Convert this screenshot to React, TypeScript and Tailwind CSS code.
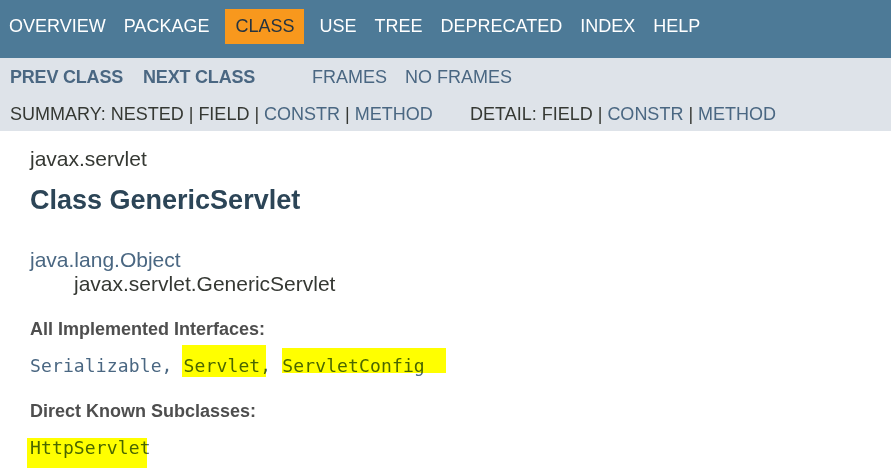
import React from 'react';

const navItems = ['OVERVIEW', 'PACKAGE', 'CLASS', 'USE', 'TREE', 'DEPRECATED', 'INDEX', 'HELP'];

interface MarkProps {
    children: React.ReactNode;
    box: string;
}

// marker highlight drawn over the text, multiplied like a real highlighter
const Mark: React.FC<MarkProps> = ({ children, box }) => (
    <span className="relative">
        {children}
        <span className={`absolute bg-[#ffff00] mix-blend-multiply ${box}`} />
    </span>
);

const App: React.FC = () => {
    return (
        <div className="w-[891px] h-[471px] overflow-hidden bg-white font-['Liberation_Sans',Arial,sans-serif] text-[#353833]">
            {/* top nav */}
            <div className="h-[58px] bg-[#4D7A97] pt-[9px] flex text-[18px]">
                {navItems.map((item) =>
                    item === 'CLASS' ? (
                        <div key={item} className="h-[35px] leading-[35px] px-[10px] ml-[7px] mr-[6px] bg-[#F8981D] text-[#253441]">
                            {item}
                        </div>
                    ) : (
                        <div key={item} className="h-[35px] leading-[35px] px-[9px] text-white">
                            {item}
                        </div>
                    )
                )}
            </div>

            {/* sub nav */}
            <div className="h-[73px] bg-[#DEE3E9] pt-[7px] pl-[10px] text-[18px] leading-[24px]">
                <div className="flex">
                    <div className="w-[302px] flex gap-[20px] font-bold tracking-[-0.2px] text-[#4A6782]">
                        <span>PREV CLASS</span>
                        <span>NEXT CLASS</span>
                    </div>
                    <div className="flex gap-[18px] text-[#4A6782]">
                        <span>FRAMES</span>
                        <span>NO FRAMES</span>
                    </div>
                </div>
                <div className="flex mt-[13px] whitespace-pre">
                    <div className="w-[460px]">
                        SUMMARY: NESTED | FIELD | <span className="text-[#4A6782]">CONSTR</span> | <span className="text-[#4A6782]">METHOD</span>
                    </div>
                    <div>
                        DETAIL: FIELD | <span className="text-[#4A6782]">CONSTR</span> | <span className="text-[#4A6782]">METHOD</span>
                    </div>
                </div>
            </div>

            {/* content */}
            <div className="pl-[30px]">
                <div className="mt-[16px] text-[21px] leading-[24px]">javax.servlet</div>
                <h2 className="mt-[14px] text-[27px] leading-[30px] font-bold text-[#2C4557]">Class GenericServlet</h2>
                <div className="mt-[33px] text-[21px] leading-[24px]">
                    <div className="text-[#4A6782]">java.lang.Object</div>
                    <div className="ml-[44px]">javax.servlet.GenericServlet</div>
                </div>

                <div className="mt-[21px] text-[18px] leading-[24px] font-bold text-[#4E4E4E]">All Implemented Interfaces:</div>
                <div className="mt-[13px] text-[18px] leading-[24px] tracking-[0.13px] font-['DejaVu_Sans_Mono',monospace] text-[#4A6782] whitespace-pre">
                    Serializable, <Mark box="-top-[10px] -bottom-[1px] -left-[2px] -right-[6px]">Servlet</Mark>, <Mark box="-top-[7px] bottom-[3px] left-0 -right-[21px]">ServletConfig</Mark>
                </div>

                <div className="mt-[21px] text-[18px] leading-[24px] font-bold text-[#4E4E4E]">Direct Known Subclasses:</div>
                <div className="mt-[13px] text-[18px] leading-[24px] tracking-[0.13px] font-['DejaVu_Sans_Mono',monospace] text-[#4A6782]">
                    <Mark box="top-[1px] -bottom-[10px] -left-[3px] right-[4px]">HttpServlet</Mark>
                </div>
            </div>
        </div>
    );
};

export default App;
